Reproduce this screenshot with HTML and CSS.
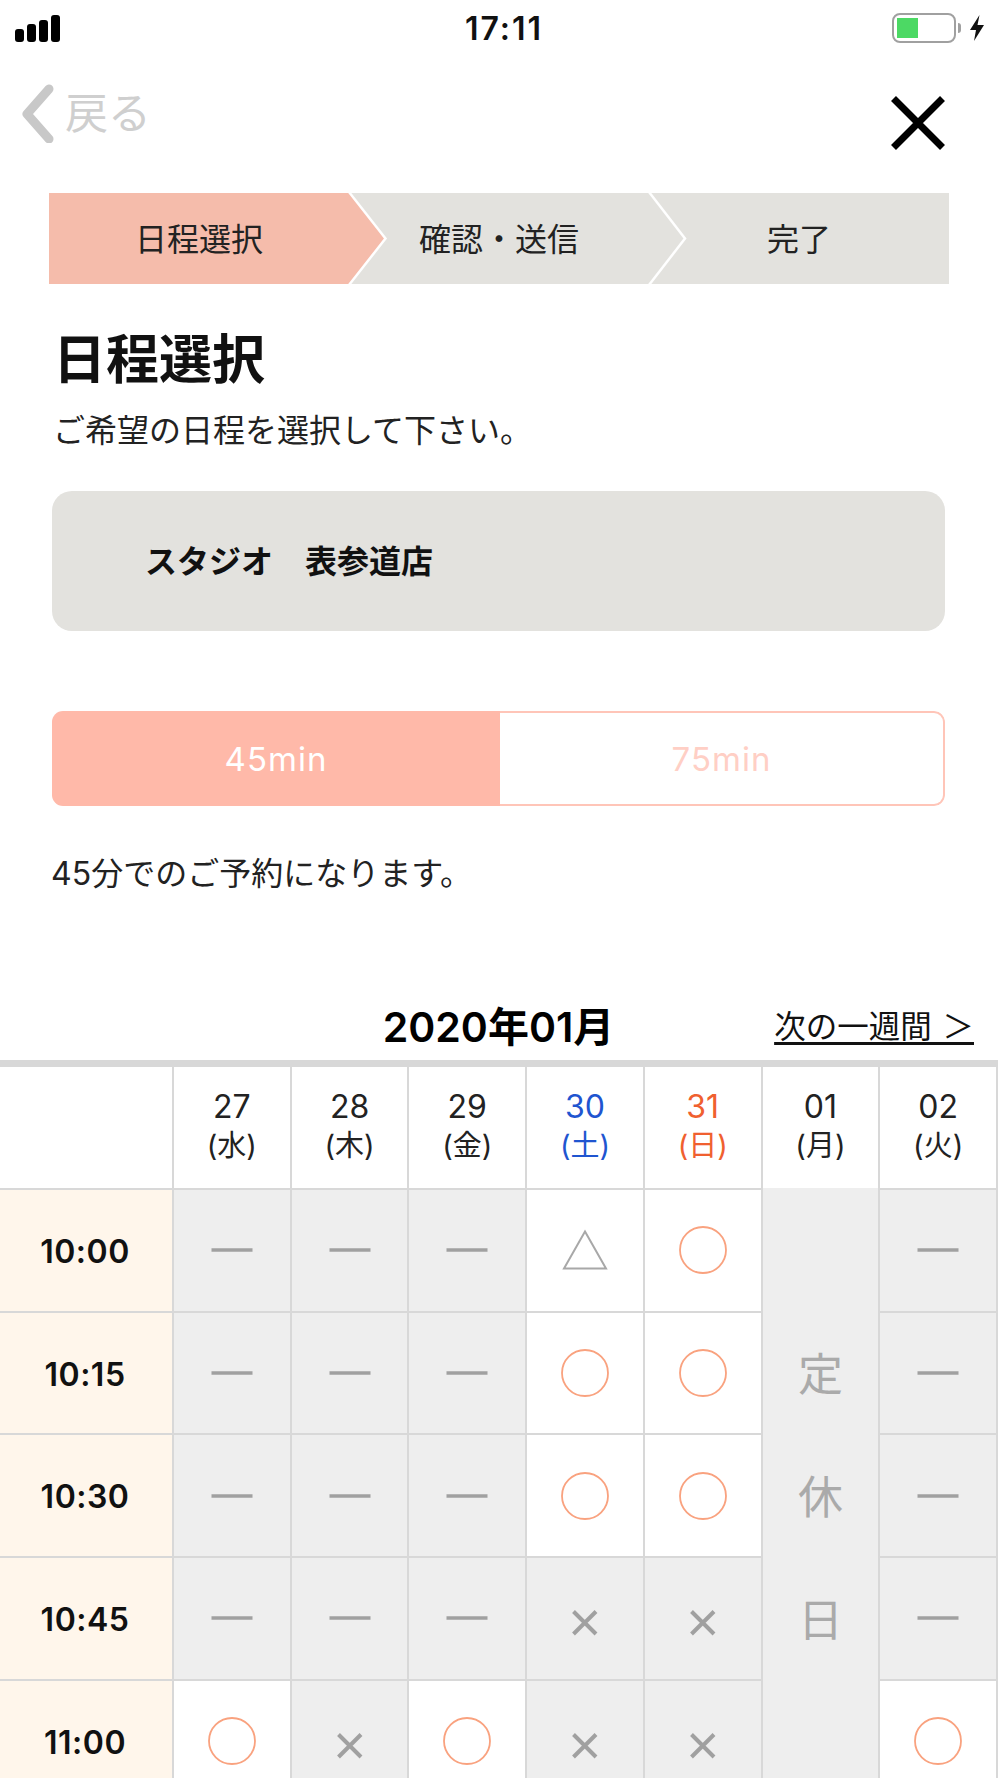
FILE: index.html
```html
<!DOCTYPE html>
<html lang="ja">
<head>
<meta charset="utf-8">
<title>日程選択</title>
<link rel="stylesheet" href="styles.css">
</head>
<body>
<svg class="defs" width="0" height="0" aria-hidden="true">
  <symbol id="i-circle" viewBox="0 0 48 48"><circle cx="24" cy="24" r="23" fill="none" stroke="#f9a27f" stroke-width="1.800"/></symbol>
  <symbol id="i-tri" viewBox="0 0 48 48"><path d="M24 5.500 L45 42.500 H3 Z" fill="none" stroke="#a8a8a8" stroke-width="2"/></symbol>
  <symbol id="i-dash" viewBox="0 0 48 48"><path d="M3.500 24 H44.500" fill="none" stroke="#a0a0a0" stroke-width="3.500"/></symbol>
  <symbol id="i-x" viewBox="0 0 48 48"><path d="M12.500 17.500 L35 40 M35 17.500 L12.500 40" fill="none" stroke="#a0a0a0" stroke-width="4"/></symbol>
</svg>
<div class="page">
  <header class="status">
    <div class="signal"><i class="b1"></i><i class="b2"></i><i class="b3"></i><i class="b4"></i></div>
    <div class="clock">17:11</div>
    <div class="power">
      <div class="battery"><div class="charge"></div></div>
      <div class="nub"></div>
      <svg class="bolt" width="16" height="26" viewBox="0 0 16 26"><path d="M10.500 0 L1 15 H7 L5 26 L15 10 H8.500 Z" fill="#111"/></svg>
    </div>
  </header>
  <nav class="nav">
    <div class="back">
      <svg class="chev" width="36" height="60" viewBox="0 0 36 60"><path d="M30 6 L8 31 L30 56" fill="none" stroke="#c8c8c8" stroke-width="9" stroke-linecap="round" stroke-linejoin="round"/></svg>
      <span>戻る</span>
    </div>
    <svg class="close" width="54" height="54" viewBox="0 0 54 54"><path d="M2.500 2.500 L51.500 51.500 M51.500 2.500 L2.500 51.500" fill="none" stroke="#000" stroke-width="7"/></svg>
  </nav>
  <div class="steps">
    <div class="step active">日程選択
      <svg class="arrow" width="40" height="91" viewBox="0 0 40 91"><path d="M0 -1 L36.500 45.500 L0 92" fill="#f5bcab" stroke="#fff" stroke-width="2.500"/></svg>
    </div>
    <div class="step">確認・送信
      <svg class="arrow" width="40" height="91" viewBox="0 0 40 91"><path d="M0 -1 L36 45.500 L0 92" fill="#e3e2de" stroke="#fff" stroke-width="2.500"/></svg>
    </div>
    <div class="step">完了</div>
  </div>
  <h1 class="title">日程選択</h1>
  <p class="sub">ご希望の日程を選択して下さい。</p>
  <div class="shop">スタジオ　表参道店</div>
  <div class="toggle">
    <div class="opt on">45min</div>
    <div class="opt">75min</div>
  </div>
  <p class="note">45分でのご予約になります。</p>
  <div class="month">
    <span></span>
    <div class="ym">2020年01月</div>
    <a class="next">次の一週間 ＞</a>
  </div>
  <div class="table">
    <div class="th"></div>
    <div class="th"><b>27</b><span>(水)</span></div>
    <div class="th"><b>28</b><span>(木)</span></div>
    <div class="th"><b>29</b><span>(金)</span></div>
    <div class="th sat"><b>30</b><span>(土)</span></div>
    <div class="th sun"><b>31</b><span>(日)</span></div>
    <div class="th"><b>01</b><span>(月)</span></div>
    <div class="th"><b>02</b><span>(火)</span></div>

    <div class="time">10:00</div>
    <div class="cell off"><svg class="sym"><use href="#i-dash"/></svg></div>
    <div class="cell off"><svg class="sym"><use href="#i-dash"/></svg></div>
    <div class="cell off"><svg class="sym"><use href="#i-dash"/></svg></div>
    <div class="cell"><svg class="sym"><use href="#i-tri"/></svg></div>
    <div class="cell"><svg class="sym"><use href="#i-circle"/></svg></div>
    <div class="holiday"><span>定</span><span>休</span><span>日</span></div>
    <div class="cell off"><svg class="sym"><use href="#i-dash"/></svg></div>

    <div class="time">10:15</div>
    <div class="cell off"><svg class="sym"><use href="#i-dash"/></svg></div>
    <div class="cell off"><svg class="sym"><use href="#i-dash"/></svg></div>
    <div class="cell off"><svg class="sym"><use href="#i-dash"/></svg></div>
    <div class="cell"><svg class="sym"><use href="#i-circle"/></svg></div>
    <div class="cell"><svg class="sym"><use href="#i-circle"/></svg></div>
    <div class="cell off"><svg class="sym"><use href="#i-dash"/></svg></div>

    <div class="time">10:30</div>
    <div class="cell off"><svg class="sym"><use href="#i-dash"/></svg></div>
    <div class="cell off"><svg class="sym"><use href="#i-dash"/></svg></div>
    <div class="cell off"><svg class="sym"><use href="#i-dash"/></svg></div>
    <div class="cell"><svg class="sym"><use href="#i-circle"/></svg></div>
    <div class="cell"><svg class="sym"><use href="#i-circle"/></svg></div>
    <div class="cell off"><svg class="sym"><use href="#i-dash"/></svg></div>

    <div class="time">10:45</div>
    <div class="cell off"><svg class="sym"><use href="#i-dash"/></svg></div>
    <div class="cell off"><svg class="sym"><use href="#i-dash"/></svg></div>
    <div class="cell off"><svg class="sym"><use href="#i-dash"/></svg></div>
    <div class="cell off"><svg class="sym"><use href="#i-x"/></svg></div>
    <div class="cell off"><svg class="sym"><use href="#i-x"/></svg></div>
    <div class="cell off"><svg class="sym"><use href="#i-dash"/></svg></div>

    <div class="time">11:00</div>
    <div class="cell"><svg class="sym"><use href="#i-circle"/></svg></div>
    <div class="cell off"><svg class="sym"><use href="#i-x"/></svg></div>
    <div class="cell"><svg class="sym"><use href="#i-circle"/></svg></div>
    <div class="cell off"><svg class="sym"><use href="#i-x"/></svg></div>
    <div class="cell off"><svg class="sym"><use href="#i-x"/></svg></div>
    <div class="cell"><svg class="sym"><use href="#i-circle"/></svg></div>
  </div>
</div>
</body>
</html>
```

FILE: styles.css
```css
* { box-sizing: border-box; }
html, body { margin: 0; padding: 0; background: #fff; }
body { font-family: Inter, "Noto Sans CJK JP", sans-serif; color: #1a1a1a; }
.defs { position: absolute; }
.page { width: 1000px; height: 1778px; overflow: hidden; }

.status { height: 56px; display: grid; grid-template-columns: 1fr auto 1fr; align-items: center; }
.signal { display: flex; align-items: flex-end; gap: 3.500px; padding-left: 15px; height: 27px; }
.signal i { display: block; width: 8.500px; background: #000; border-radius: 3px; }
.signal .b1 { height: 13px; }
.signal .b2 { height: 18px; }
.signal .b3 { height: 22px; }
.signal .b4 { height: 27px; }
.clock { margin-left: 8px; font-size: 32px; font-weight: 600; letter-spacing: 2px; color: #111; }
.power { display: flex; align-items: center; justify-content: flex-end; padding-right: 15px; }
.battery { width: 64px; height: 30px; border: 2.500px solid #a0a0a0; border-radius: 8px; padding: 3px; }
.charge { width: 21px; height: 100%; background: #4cd964; }
.nub { width: 3px; height: 10px; margin-left: 2px; background: #a0a0a0; border-radius: 0 3px 3px 0; }
.bolt { margin-left: 8px; }

.nav { height: 137px; display: flex; justify-content: space-between; align-items: flex-start; padding: 26px 55px 0 19px; }
.back { display: flex; align-items: center; gap: 10px; color: #cfcfcf; font-size: 43px; line-height: 62px; }
.close { margin-top: 14px; }

.steps { width: 900px; height: 91px; margin-left: 49px; display: flex; background: #e3e2de; }
.step { position: relative; flex: 1 1 0; display: flex; align-items: center; justify-content: center; padding-bottom: 4px; font-size: 32px; color: #222; }
.step.active { background: #f5bcab; }
.arrow { position: absolute; left: 100%; top: 0; overflow: visible; }

.title { margin: 46px 0 0 53px; font-size: 53px; line-height: 60px; font-weight: 700; color: #111; }
.sub { margin: 21px 0 0 53px; font-size: 32px; line-height: 40px; color: #222; }
.shop { width: 893px; height: 140px; margin: 40px 0 0 52px; padding: 0 0 4px 93px; display: flex; align-items: center; background: #e3e2de; border-radius: 20px; font-size: 32px; font-weight: 700; color: #111; }

.toggle { width: 893px; height: 95px; margin: 80px 0 0 52px; display: flex; border-radius: 11px; overflow: hidden; }
.opt { flex: 1 1 0; display: flex; align-items: center; justify-content: center; font-size: 33px; letter-spacing: 1px; color: #ffcfc5; border: 2px solid #ffc5b8; border-left: 0; border-radius: 0 11px 11px 0; }
.opt.on { flex: 0 0 448px; background: #ffb9a9; color: #fff; border: 0; border-radius: 0; }

.note { margin: 48px 0 0 51px; font-size: 32px; line-height: 40px; color: #222; }

.month { width: 997px; height: 62px; margin-top: 104px; padding-bottom: 5px; display: grid; grid-template-columns: 1fr auto 1fr; grid-template-rows: 57px; align-items: center; }
.ym { font-size: 41px; line-height: 40px; font-weight: 600; color: #000; }
.next { justify-self: end; margin-right: 23px; font-size: 31.500px; line-height: 40px; word-spacing: 2px; color: #111; text-decoration: underline; text-underline-offset: 4px; }

.table { width: 998px; display: grid; grid-template-columns: 172px repeat(7, 1fr); grid-template-rows: 121px; grid-auto-rows: 120.700px; gap: 2px; padding: 7px 2px 0 0; background: #d8d8d8; }
.th { background: #fff; display: flex; flex-direction: column; align-items: center; padding-top: 21px; color: #222; }
.th b { font-size: 32px; font-weight: 400; line-height: 38px; }
.th span { font-size: 29px; line-height: 40px; }
.th.sat { color: #1f55d0; }
.th.sun { color: #f0602f; }
.time { background: #fff6eb; display: flex; align-items: center; justify-content: center; padding: 2px 2px 0 0; font-size: 32px; font-weight: 600; letter-spacing: 0.500px; color: #111; }
.cell { background: #fff; display: flex; align-items: center; justify-content: center; }
.cell.off { background: #eee; }
.sym { width: 48px; height: 48px; }
.holiday { grid-row: 2 / span 5; grid-column: 7; margin-top: -2px; background: #eee; display: flex; flex-direction: column; align-items: center; padding-top: 125px; color: #aaa; font-size: 45px; }
.holiday span { height: 123px; line-height: 123px; }
```
